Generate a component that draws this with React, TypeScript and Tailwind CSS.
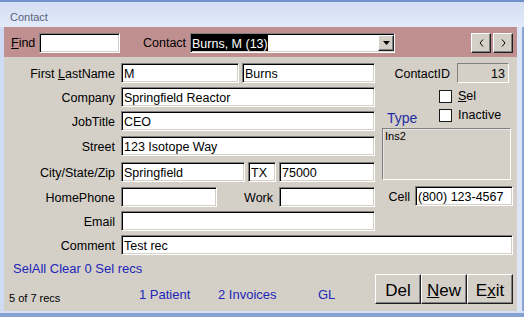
import React from "react";

const sunken =
  "bg-white border border-t-[#808080] border-l-[#808080] border-b-white border-r-white shadow-[inset_1px_1px_0_#000,inset_-1px_-1px_0_#d4d0c8]";
const raised =
  "bg-[#d4d0c8] border border-t-white border-l-white border-b-[#202020] border-r-[#202020] shadow-[inset_-1px_-1px_0_#808080]";

function Field({ w, value, extra = "" }: { w: string; value?: string; extra?: string }) {
  return (
    <div className={`${sunken} ${w} h-[20px] flex items-center pl-[2px] pt-[2px] leading-[14px] text-[12.5px] text-black whitespace-nowrap overflow-hidden ${extra}`}>
      {value}
    </div>
  );
}

function Label({ children }: { children: React.ReactNode }) {
  return (
    <div className="w-[111px] h-[20px] flex items-center justify-end pt-[2px] leading-[14px] text-[12.5px] text-black whitespace-nowrap">
      <span>{children}</span>
    </div>
  );
}

function Check({ label }: { label: React.ReactNode }) {
  return (
    <div className="flex items-center h-[13px]">
      <div className="w-[13px] h-[13px] bg-white border border-[#1a1a1a]" />
      <span className="ml-[6px] text-[12.5px] leading-[13px] text-black">{label}</span>
    </div>
  );
}

export default function App() {
  return (
    <div className="w-[524px] h-[317px] overflow-hidden bg-[#dbe5f6] flex flex-col font-['Liberation_Sans',Arial,sans-serif]">
      {/* top border */}
      <div className="h-[2px] shrink-0 bg-[#7191c9]" />
      {/* title bar */}
      <div className="h-[25px] shrink-0 bg-gradient-to-b from-[#d3def3] to-[#e3ebf9] flex items-start pl-[10px] pt-[9px]">
        <span className="block text-[11px] leading-[13px] text-[#56637e]">Contact</span>
      </div>
      {/* main */}
      <div className="flex h-[284px] shrink-0">
        <div className="w-[4px] bg-[#cfdbf2]" />
        <div className="w-[513px] flex flex-col">
          {/* red header */}
          <div className="h-[30px] shrink-0 bg-[#c09090] flex items-start pt-[6px] pl-[7px] pr-[4px]">
            <div className="w-[28px] h-[20px] flex items-center leading-[14px] text-[12.5px] text-black">
              <span><span className="underline">F</span>ind</span>
            </div>
            <div className={`${sunken} w-[81px] h-[20px]`} />
            <div className="ml-[23px] w-[47px] h-[20px] flex items-center leading-[14px] text-[12.5px] text-black">
              Contact
            </div>
            <div className={`${sunken} w-[205px] h-[20px] flex items-stretch p-[1px] pr-0`}>
              <span className="bg-black text-white text-[12.5px] leading-[18px] whitespace-nowrap">Burns, M (13)</span>
              <div className="flex-1" />
              <div className={`${raised} w-[16px] flex items-center justify-center`}>
                <svg width="7" height="4" viewBox="0 0 7 4">
                  <polygon points="0,0 7,0 3.5,4" fill="#000" />
                </svg>
              </div>
            </div>
            <div className="flex-1" />
            <div className={`${raised} w-[20px] h-[20px] flex items-center justify-center`}>
              <svg width="5" height="8" viewBox="0 0 5 8">
                <polyline points="4,0.5 1,4 4,7.5" fill="none" stroke="#000" strokeWidth="1" />
              </svg>
            </div>
            <div className={`${raised} ml-[2px] w-[20px] h-[20px] flex items-center justify-center`}>
              <svg width="5" height="8" viewBox="0 0 5 8">
                <polyline points="1,0.5 4,4 1,7.5" fill="none" stroke="#000" strokeWidth="1" />
              </svg>
            </div>
          </div>

          {/* body */}
          <div className="flex-1 bg-[#d4d0c8] flex flex-col">
            <div className="flex">
              {/* left column */}
              <div className="w-[371px] flex flex-col">
                <div className="flex mt-[6px]">
                  <Label>
                    First <span className="underline">L</span>astName
                  </Label>
                  <div className="ml-[6px] flex gap-[3px]">
                    <Field w="w-[118px]" value="M" />
                    <Field w="w-[133px]" value="Burns" />
                  </div>
                </div>
                <div className="flex mt-[4px]">
                  <Label>Company</Label>
                  <Field w="ml-[6px] w-[254px]" value="Springfield Reactor" />
                </div>
                <div className="flex mt-[4px]">
                  <Label>JobTitle</Label>
                  <Field w="ml-[6px] w-[254px]" value="CEO" />
                </div>
                <div className="flex mt-[5px]">
                  <Label>Street</Label>
                  <Field w="ml-[6px] w-[254px]" value="123 Isotope Way" />
                </div>
                <div className="flex mt-[6px]">
                  <Label>City/State/Zip</Label>
                  <div className="ml-[6px] flex">
                    <Field w="w-[124px]" value="Springfield" />
                    <Field w="ml-[3px] w-[28px]" value="TX" />
                    <Field w="ml-[3px] w-[96px]" value="75000" />
                  </div>
                </div>
                <div className="flex mt-[5px]">
                  <Label>HomePhone</Label>
                  <Field w="ml-[6px] w-[96px]" />
                  <div className="flex-1 h-[20px] flex items-center justify-end pr-[6px] pt-[2px] leading-[14px] text-[12.5px] text-black">
                    Work
                  </div>
                  <Field w="w-[96px]" />
                </div>
                <div className="flex mt-[4px]">
                  <Label>Email</Label>
                  <Field w="ml-[6px] w-[254px]" />
                </div>
              </div>

              {/* right column */}
              <div className="ml-[7px] w-[131px] flex flex-col">
                <div className="flex justify-end items-center mt-[6px] pr-[4px]">
                  <div className="h-[20px] flex items-center pt-[2px] leading-[14px] text-[12.5px] text-black">
                    ContactID
                  </div>
                  <div className="ml-[7px] w-[52px] h-[20px] border border-t-[#808080] border-l-[#808080] border-b-white border-r-white flex items-center justify-end pr-[3px] pt-[2px] leading-[14px] text-[12.5px] text-black">
                    13
                  </div>
                </div>
                <div className="mt-[7px] pl-[57px]">
                  <Check label={<><span className="underline">S</span>el</>} />
                </div>
                <div className="mt-[6px] flex items-start">
                  <span className="w-[57px] pl-[5px] mt-[1px] text-[14px] leading-[16px] text-[#1d2ea3]">Type</span>
                  <Check label="Inactive" />
                </div>
                <div className="mt-[2px] w-[129px] h-[52px] border border-t-[#808080] border-l-[#808080] border-b-white border-r-white shadow-[inset_1px_1px_0_#e8e6e2] pl-[2px] pt-[1px] flex items-start">
                  <span className="block text-[11px] leading-[13px] text-black">Ins2</span>
                </div>
                <div className="mt-[6px] flex justify-end items-center">
                  <div className="h-[20px] flex items-center pt-[2px] leading-[14px] text-[12.5px] text-black">
                    Cell
                  </div>
                  <Field w="ml-[5px] w-[98px]" value="(800) 123-4567" />
                </div>
              </div>
            </div>

            {/* comment */}
            <div className="flex mt-[4px]">
              <Label>Comment</Label>
              <Field w="ml-[6px] w-[392px]" value="Test rec" />
            </div>

            {/* footer */}
            <div className="flex mt-[6px]">
              <div className="flex-1 flex flex-col">
                <div className="pl-[9px] h-[15px] text-[13px] leading-[15px] text-[#2226b8] whitespace-nowrap">
                  SelAll Clear 0 Sel recs
                </div>
                <div className="flex items-start mt-[11px]">
                  <span className="w-[135px] pl-[5px] mt-[5px] text-[11px] leading-[13px] text-black whitespace-nowrap">
                    5 of 7 recs
                  </span>
                  <span className="w-[79px] text-[13px] leading-[15px] text-[#2226b8] whitespace-nowrap">1 Patient</span>
                  <span className="w-[100px] text-[13px] leading-[15px] text-[#2226b8] whitespace-nowrap">2 Invoices</span>
                  <span className="text-[13px] leading-[15px] text-[#2226b8]">GL</span>
                </div>
              </div>
              <div className="flex mt-[13px] pr-[4px]">
                <div className={`${raised} w-[46px] h-[30px] flex items-center justify-center pt-[3px] text-[17px] leading-[19px] text-black`}>
                  Del
                </div>
                <div className={`${raised} w-[46px] h-[30px] flex items-center justify-center pt-[3px] text-[17px] leading-[19px] text-black`}>
                  <span><span className="underline">N</span>ew</span>
                </div>
                <div className={`${raised} w-[46px] h-[30px] flex items-center justify-center pt-[3px] text-[17px] leading-[19px] text-black`}>
                  <span>E<span className="underline">x</span>it</span>
                </div>
              </div>
            </div>
          </div>
        </div>
        <div className="flex-1 bg-[#dce6f7] border-r-[2px] border-[#8aa5d6]" />
      </div>
      {/* bottom border */}
      <div className="h-[2px] shrink-0 bg-[#d5e0f4]" />
      <div className="h-[4px] shrink-0 bg-[#86a2d5]" />
    </div>
  );
}
